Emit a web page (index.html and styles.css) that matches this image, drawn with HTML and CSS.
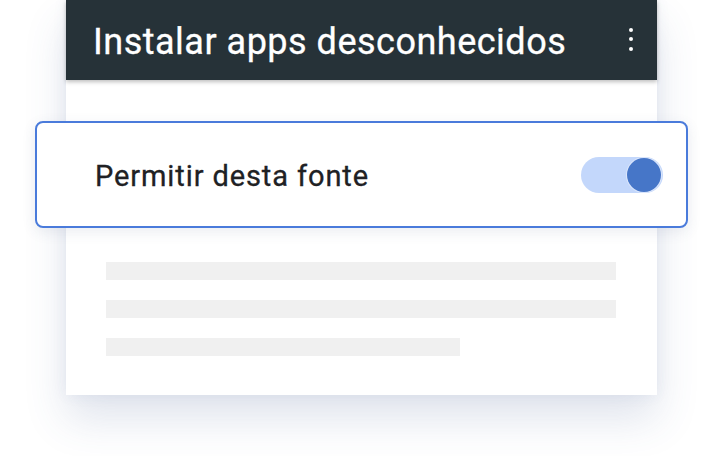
FILE: index.html
```html
<!DOCTYPE html>
<html lang="pt">
<head>
<meta charset="utf-8">
<link rel="stylesheet" href="styles.css">
</head>
<body>
<div class="stage">
  <div class="window">
    <header class="appbar">
      <h1 class="title">Instalar apps desconhecidos</h1>
      <div class="more" aria-label="Mais opções"><span></span><span></span><span></span></div>
    </header>
    <div class="content">
      <div class="setting">
        <span class="setting-label">Permitir desta fonte</span>
        <div class="switch" role="switch" aria-checked="true"><div class="thumb"></div></div>
      </div>
      <div class="lines">
        <div class="line"></div>
        <div class="line"></div>
        <div class="line short"></div>
      </div>
    </div>
  </div>
</div>
</body>
</html>
```
FILE: styles.css
```css
* { box-sizing: border-box; }
html, body { margin: 0; padding: 0; background: #ffffff; }
body { width: 723px; height: 456px; overflow: hidden; font-family: Roboto, "Noto Sans", sans-serif; }

.stage { padding-left: 66px; }

.window {
  width: 591px;
  height: 395px;
  background: #ffffff;
  box-shadow: 0 24px 40px rgba(60, 90, 140, 0.16), 0 0 14px rgba(60, 90, 140, 0.07);
  display: flex;
  flex-direction: column;
}

.appbar {
  height: 80px;
  background: #263238;
  display: flex;
  align-items: center;
  padding: 0 24px 0 27px;
  box-shadow: 0 2px 4px rgba(0, 0, 0, 0.25);
  position: relative;
  z-index: 1;
}
.title {
  margin: 0;
  flex: 1;
  color: #ffffff;
  font-size: 36px;
  font-weight: 400;
  line-height: 1;
  padding-top: 3px;
  letter-spacing: 0.5px;
  -webkit-text-stroke: 0.3px #ffffff;
}
.more {
  display: flex;
  flex-direction: column;
  gap: 5.5px;
  padding-bottom: 2px;
}
.more span {
  width: 4px;
  height: 4px;
  border-radius: 50%;
  background: #ffffff;
}

.content { display: flex; flex-direction: column; padding-top: 41px; }

.setting {
  margin: 0 -31px;
  height: 107px;
  border: 2px solid #4a7bdb;
  border-radius: 8px;
  background: #ffffff;
  display: flex;
  align-items: center;
  justify-content: space-between;
  padding: 0 23px 0 58px;
  box-shadow: 0 4px 14px rgba(60, 80, 120, 0.10);
  position: relative;
}
.setting-label {
  font-size: 29px;
  color: #202124;
  font-weight: 400;
  padding-top: 3px;
  letter-spacing: 0.9px;
  -webkit-text-stroke: 0.3px #202124;
}
.switch {
  width: 82px;
  height: 36px;
  border-radius: 18px;
  background: #c3d7fb;
  display: flex;
  align-items: center;
  justify-content: flex-end;
  padding-right: 2px;
}
.thumb {
  width: 34px;
  height: 34px;
  border-radius: 50%;
  background: #4676c8;
  box-shadow: 0 0 0 1px #dbe6fb;
}

.lines {
  display: flex;
  flex-direction: column;
  gap: 20px;
  padding: 34px 40px 0 40px;
}
.line { height: 18px; background: #f0f0f0; width: 510px; }
.line.short { width: 354px; }
```
